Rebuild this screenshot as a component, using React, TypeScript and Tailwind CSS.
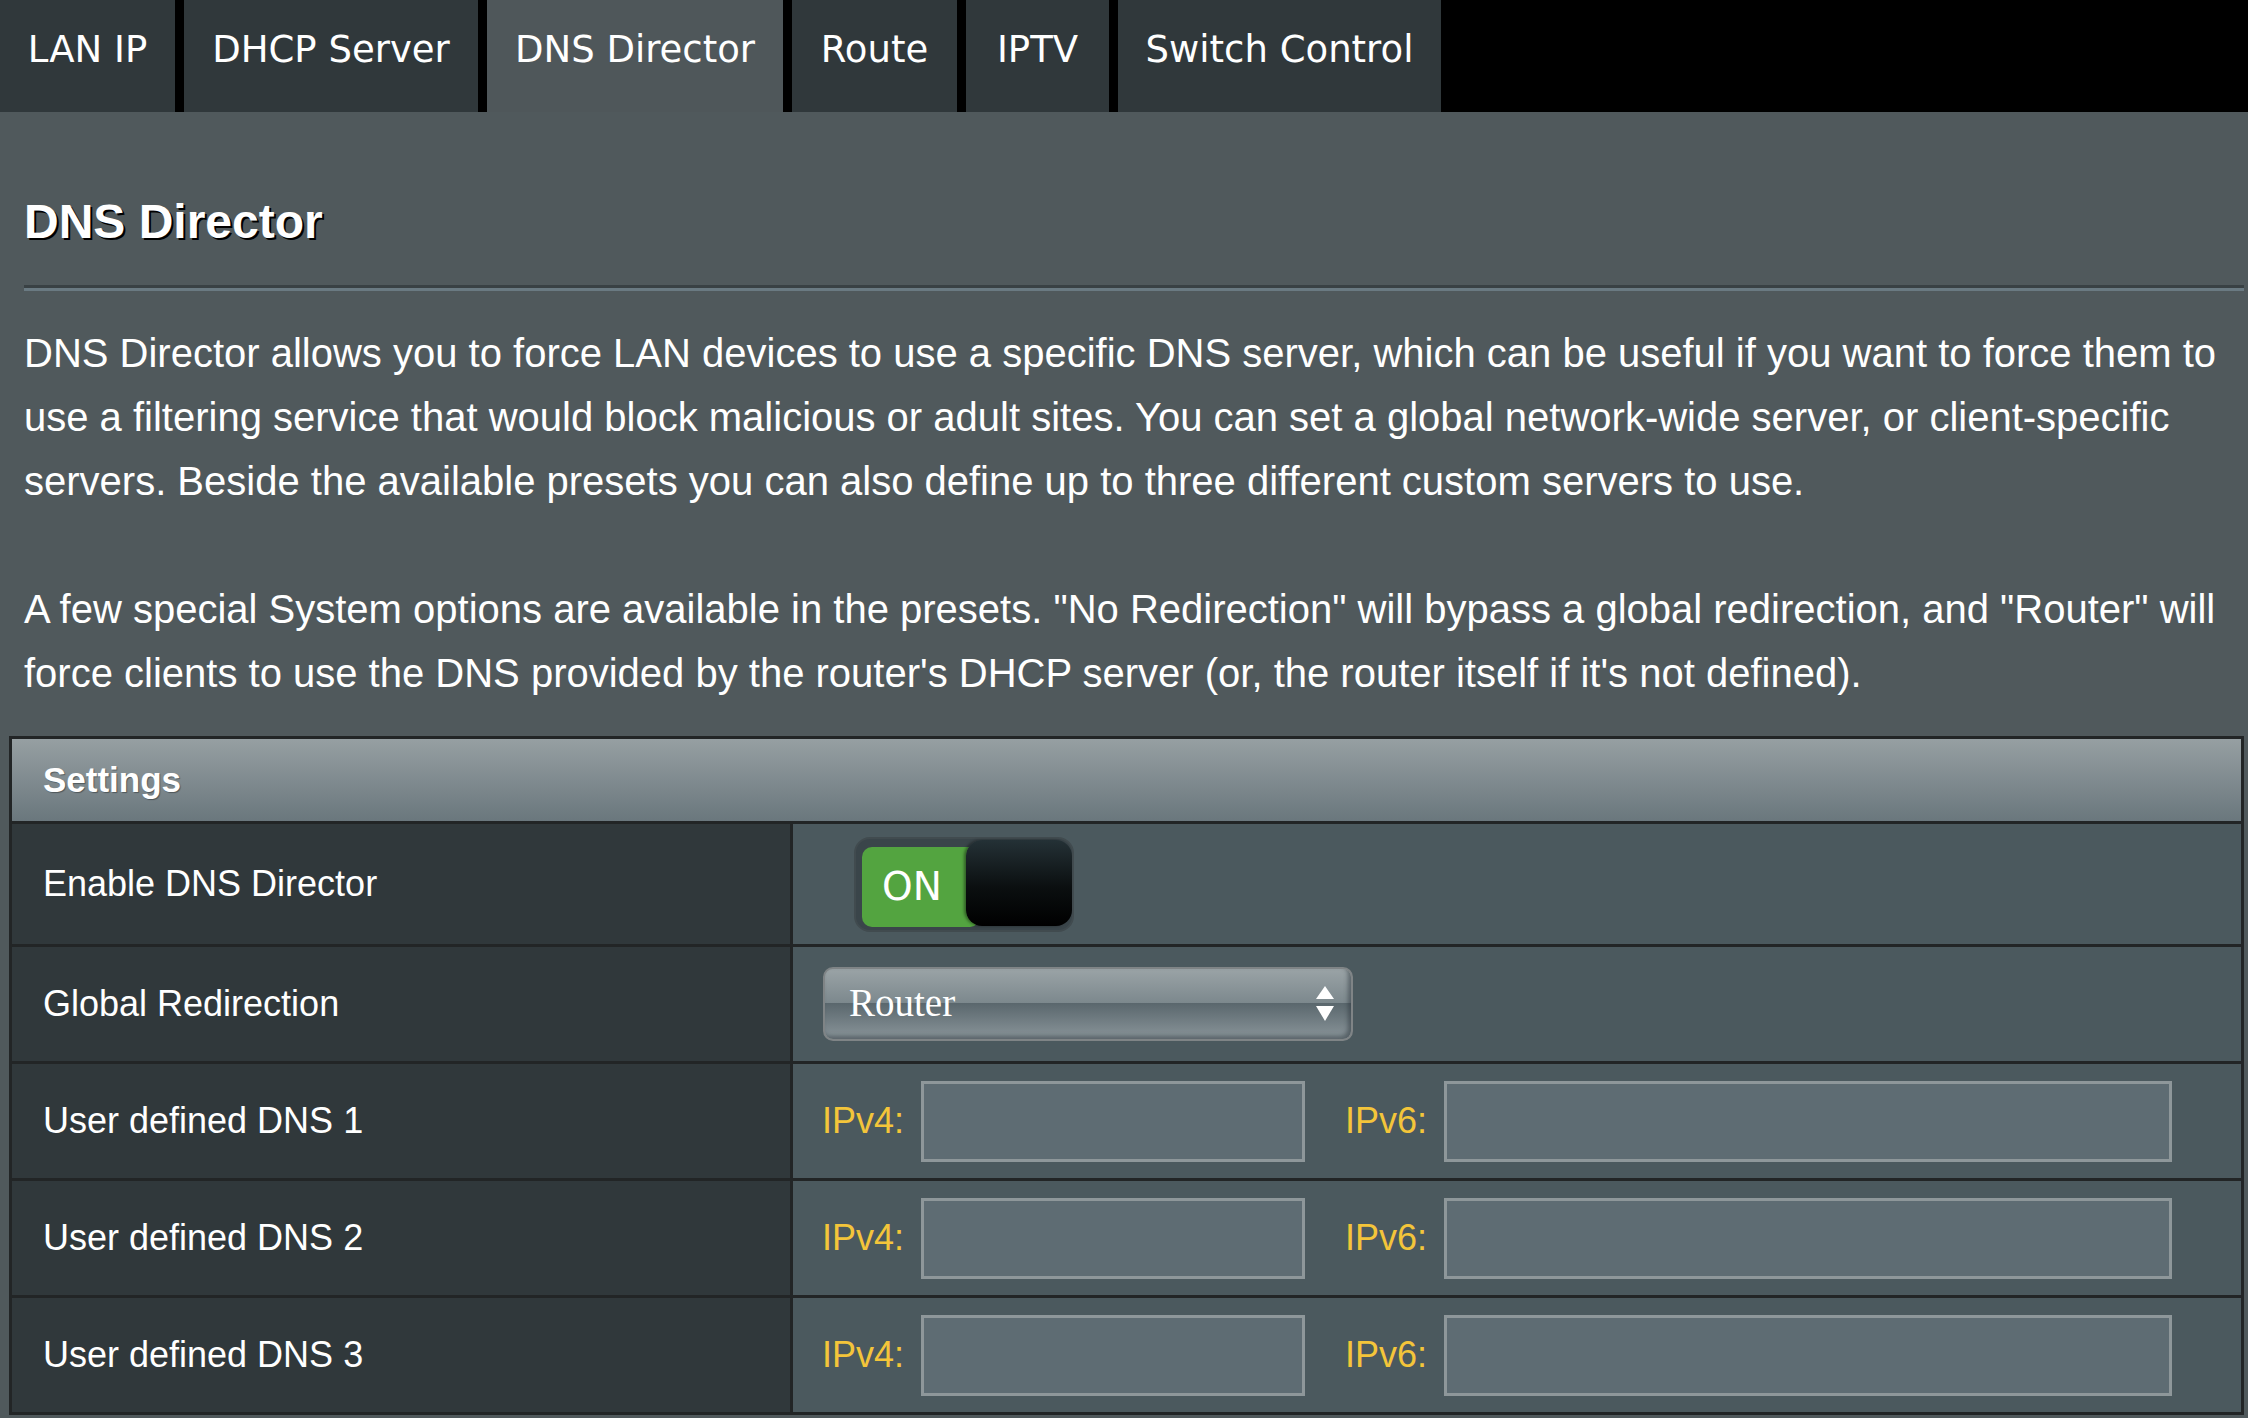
import React, { useState } from 'react';

const tabs = [
  { label: 'LAN IP', width: 'w-[175px]' },
  { label: 'DHCP Server', width: 'w-[294px]' },
  { label: 'DNS Director', width: 'w-[296px]' },
  { label: 'Route', width: 'w-[165px]' },
  { label: 'IPTV', width: 'w-[143px]' },
  { label: 'Switch Control', width: 'w-[323px]' },
];

const dnsRows = ['User defined DNS 1', 'User defined DNS 2', 'User defined DNS 3'];

/**
 * Up/down arrows on the right of the select
 */
const SelectArrows: React.FC = () => (
  <svg width="18" height="36" viewBox="0 0 18 36" className="shrink-0">
    <polygon points="9,0 18,13 0,13" fill="#ffffff" />
    <polygon points="0,20 18,20 9,35" fill="#ffffff" />
  </svg>
);

const Toggle: React.FC<{ on: boolean; onChange: () => void }> = ({ on, onChange }) => (
  <button
    type="button"
    onClick={onChange}
    className="relative w-[220px] h-[95px] rounded-[16px] border-2 border-[#414b4f] bg-[#3a454a] cursor-pointer"
  >
    <span className="absolute left-[6px] top-[8px] w-[118px] h-[80px] rounded-[10px] bg-[#53a440] flex items-center pl-[20px] text-white text-[39px] font-['DejaVu_Sans',sans-serif] leading-none">
      {on ? 'ON' : 'OFF'}
    </span>
    <span className="absolute right-0 top-[1px] w-[106px] h-[86px] rounded-[16px] bg-[linear-gradient(to_bottom,#243136_0%,#0b0f10_55%,#000000_100%)] shadow-[-2px_0_3px_rgba(0,0,0,0.4)]" />
  </button>
);

const TextInput: React.FC<{ width: string }> = ({ width }) => (
  <input
    type="text"
    className={`${width} h-[81px] border-[3px] border-[#8e979a] bg-[#5e6c73] text-white text-[34px] px-3 outline-none`}
  />
);

const App: React.FC = () => {
  const [enabled, setEnabled] = useState(true);

  return (
    <div className="min-h-screen bg-[#50595c] font-['Liberation_Sans',Arial,sans-serif] text-white">
      {/* Tab bar */}
      <nav className="flex h-[112px] bg-black gap-[9px]">
        {tabs.map((tab) => (
          <div
            key={tab.label}
            className={`${tab.width} h-full text-center pt-[28px] text-[37px] leading-[43px] font-['DejaVu_Sans',sans-serif] ${
              tab.label === 'DNS Director' ? 'bg-[#4f575a]' : 'bg-[#30383b]'
            }`}
          >
            {tab.label}
          </div>
        ))}
      </nav>

      <div className="pl-[24px] pr-[4px]">
        <h1 className="pt-[86px] text-[48px] leading-[48px] font-bold [text-shadow:2px_2px_0_#000]">
          DNS Director
        </h1>
        <div className="mt-[39px] h-[3px] bg-[#394144]" />
        <div className="h-[3px] bg-[#6a7a82]" />

        <div className="mt-[30px] text-[40px] leading-[64px]">
          <p>
            DNS Director allows you to force LAN devices to use a specific DNS server, which can be
            useful if you want to force them to use a filtering service that would block malicious
            or adult sites. You can set a global network-wide server, or client-specific servers.
            Beside the available presets you can also define up to three different custom servers to
            use.
          </p>
          <p className="mt-[64px]">
            A few special System options are available in the presets. "No Redirection" will bypass
            a global redirection, and "Router" will force clients to use the DNS provided by the
            router's DHCP server (or, the router itself if it's not defined).
          </p>
        </div>
      </div>

      {/* Settings table */}
      <section className="mt-[31px] ml-[9px] mr-[4px] border-[3px] border-[#222526]">
        <div className="h-[82px] flex items-center pl-[31px] bg-[linear-gradient(to_bottom,#969fa2,#6a777d)] text-[35px] font-bold [text-shadow:1px_1px_1px_rgba(0,0,0,0.35)]">
          Settings
        </div>

        <div className="flex h-[123px] border-t-[3px] border-[#222526]">
          <div className="w-[778px] bg-[#30383b] flex items-center pl-[31px] text-[36px]">
            Enable DNS Director
          </div>
          <div className="flex-1 border-l-[3px] border-[#222526] bg-[#4b595e] flex items-center pl-[61px]">
            <Toggle on={enabled} onChange={() => setEnabled(!enabled)} />
          </div>
        </div>

        <div className="flex h-[117px] border-t-[3px] border-[#222526]">
          <div className="w-[778px] bg-[#30383b] flex items-center pl-[31px] text-[36px]">
            Global Redirection
          </div>
          <div className="flex-1 border-l-[3px] border-[#222526] bg-[#4b595e] flex items-center pl-[30px]">
            <div className="w-[530px] h-[74px] rounded-[10px] border-2 border-[#7f8486] bg-[linear-gradient(to_bottom,#9aa3a6_0%,#7c888d_49%,#5a676d_49%,#8a959a_100%)] flex items-center justify-between pl-[24px] pr-[17px] shadow-[inset_-3px_-3px_4px_rgba(40,50,55,0.5)]">
              <span className="font-['Liberation_Serif',serif] text-[39px] leading-none -mt-[3px]">Router</span>
              <SelectArrows />
            </div>
          </div>
        </div>

        {dnsRows.map((label) => (
          <div key={label} className="flex h-[117px] border-t-[3px] border-[#222526]">
            <div className="w-[778px] bg-[#30383b] flex items-center pl-[31px] text-[36px]">
              {label}
            </div>
            <div className="flex-1 border-l-[3px] border-[#222526] bg-[#4b595e] flex items-center pl-[29px] text-[36px] text-[#f4c53a]">
              <span>IPv4:</span>
              <span className="ml-[17px]">
                <TextInput width="w-[384px]" />
              </span>
              <span className="ml-[40px]">IPv6:</span>
              <span className="ml-[17px]">
                <TextInput width="w-[728px]" />
              </span>
            </div>
          </div>
        ))}
      </section>
    </div>
  );
};

export default App;
